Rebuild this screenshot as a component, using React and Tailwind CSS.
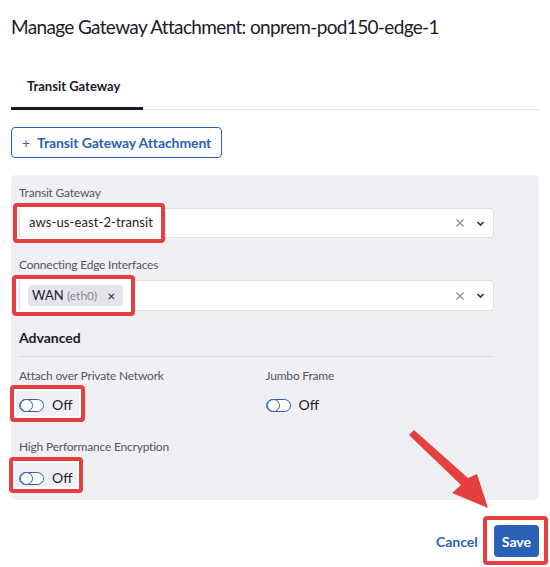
import React from 'react'

const font = { fontFamily: '"Lato", "Noto Sans", sans-serif' }

function Toggle() {
  return (
    <div className="flex h-[20px] items-center gap-2">
      <span className="relative h-[13px] w-[25px] rounded-full border border-[#2a62b8] bg-white">
        <span className="absolute left-0 top-[-1px] h-[13px] w-[13px] rounded-full border border-[#2a62b8] bg-white" />
      </span>
      <span className="text-[14px] leading-[20px] text-[#1b1b2a]">Off</span>
    </div>
  )
}

function SelectIcons() {
  return (
    <div className="flex items-center gap-[11px] pr-[8px]">
      <svg width="10" height="10" viewBox="0 0 10 10">
        <path d="M1.5 1.5 L8.5 8.5 M8.5 1.5 L1.5 8.5" stroke="#8a8a93" strokeWidth="1.2" />
      </svg>
      <svg width="9" height="9" viewBox="0 0 9 9">
        <path d="M1.5 3 L4.5 6 L7.5 3" fill="none" stroke="#2c2c38" strokeWidth="1.6" />
      </svg>
    </div>
  )
}

function Mark({ className }) {
  return (
    <div
      className={`pointer-events-none absolute rounded-[4px] border-[4px] border-[#e5403f] shadow-[inset_0_0_0_2px_#ffffff] ${className}`}
    />
  )
}

function Label({ children, className = '' }) {
  return <div className={`text-[12px] leading-[15px] tracking-[-0.2px] text-[#55555f] ${className}`}>{children}</div>
}

export default function App() {
  return (
    <div className="relative h-[567px] w-[550px] overflow-hidden bg-white text-[#1b1b2a]" style={font}>
      <h1 className="px-[11px] pt-[13px] text-[19px] leading-[28px] tracking-[-0.65px] text-[#1b1b2a]">
        Manage Gateway Attachment: onprem-pod150-edge-1
      </h1>

      <div className="mx-[11px] mt-[22px] flex border-b border-[#e1e1e6]">
        <div className="-mb-px w-[132px] border-b-[3px] border-[#1d1b2e] pb-[11px] pl-4 pt-[13px] text-[13px] font-bold leading-[20px]">
          Transit Gateway
        </div>
      </div>

      <button className="ml-[11px] mt-[17px] flex h-[31px] items-center gap-[7px] rounded-[4px] border border-[#2a62b8] px-[10px] text-[14px] font-bold tracking-[-0.1px] text-[#2a62b8]">
        <span className="text-[14px] font-normal">+</span>
        Transit Gateway Attachment
      </button>

      <div className="mx-[11px] mt-[17px] h-[325px] rounded-[5px] bg-[#efeff4] pl-[8px] pr-[45px] pt-[10px]">
        <Label>Transit Gateway</Label>
        <div className="mt-[8px] flex h-[30px] items-center justify-between rounded-[4px] border border-[#dedee4] bg-white pl-[9px]">
          <span className="text-[13px] tracking-[0.1px]">aws-us-east-2-transit</span>
          <SelectIcons />
        </div>

        <Label className="mt-[19px]">Connecting Edge Interfaces</Label>
        <div className="mt-[8px] flex h-[31px] items-center justify-between rounded-[4px] border border-[#dedee4] bg-white pl-[8px]">
          <span className="flex h-[21px] items-center gap-[6px] rounded-[4px] bg-[#e4e4ea] pl-[4px] pr-[8px] text-[13px]">
            <span>
              WAN <span className="text-[12px] text-[#8a8a93]">(eth0)</span>
            </span>
            <span className="ml-[4px] text-[14px] leading-none">×</span>
          </span>
          <SelectIcons />
        </div>

        <div className="mt-[18px] text-[14px] font-bold leading-[18px]">Advanced</div>
        <div className="mt-[9px] border-t border-[#dcdce2]" />

        <div className="mt-[11px] grid grid-cols-2 gap-x-4">
          <div>
            <Label>Attach over Private Network</Label>
            <div className="mt-[12px]">
              <Toggle />
            </div>
          </div>
          <div className="pl-[1px]">
            <Label>Jumbo Frame</Label>
            <div className="mt-[12px]">
              <Toggle />
            </div>
          </div>
        </div>

        <Label className="mt-[24px]">High Performance Encryption</Label>
        <div className="mt-[14px]">
          <Toggle />
        </div>
      </div>

      <div className="mr-[11px] mt-[25px] flex items-center justify-end gap-[16px]">
        <span className="text-[14px] font-bold text-[#2a62b8]">Cancel</span>
        <button className="h-[32px] rounded-[4px] bg-[#2a62b8] px-[8px] text-[14px] font-bold text-white">Save</button>
      </div>

      <Mark className="left-[13px] top-[203px] h-[40px] w-[152px]" />
      <Mark className="left-[12px] top-[275px] h-[41px] w-[123px]" />
      <Mark className="left-[10px] top-[385px] h-[37px] w-[75px]" />
      <Mark className="left-[9px] top-[457px] h-[36px] w-[74px]" />
      <Mark className="left-[483px] top-[516px] h-[49px] w-[65px]" />

      <svg className="pointer-events-none absolute left-0 top-0" width="550" height="567">
        <path d="M409 435 L414 430 L468 478 L477 474 L488 508 L452 493 L461 485 Z" fill="#e5403f" strokeLinejoin="round" />
      </svg>
    </div>
  )
}
